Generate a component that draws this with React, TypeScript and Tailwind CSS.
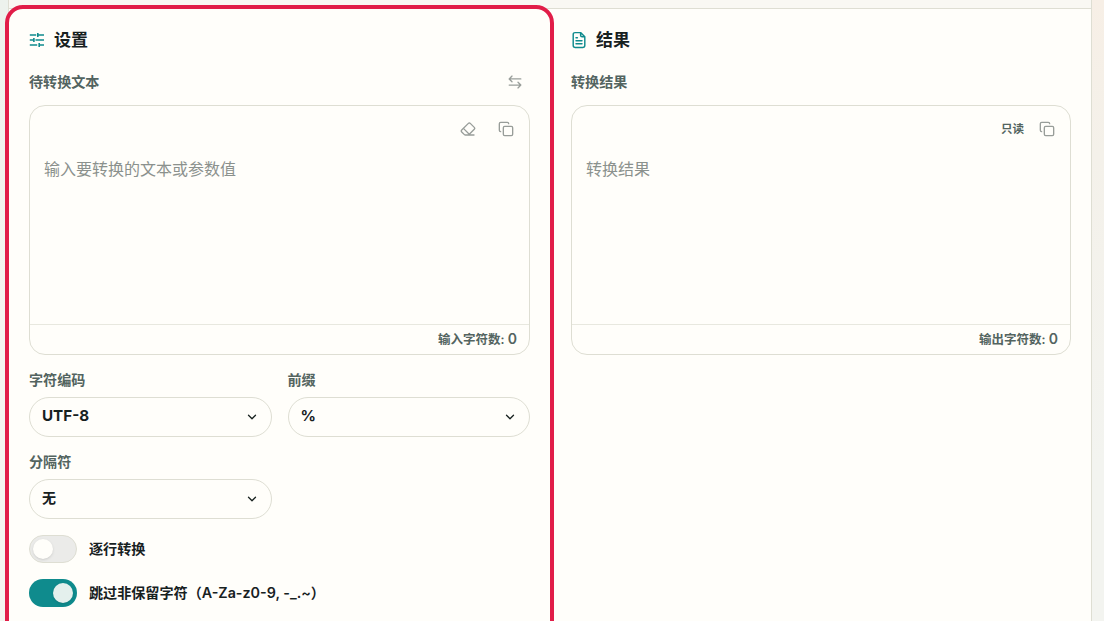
import React from "react";
import { ChevronDown, Copy, Eraser } from "lucide-react";

function SlidersIcon() {
  return (
    <svg width="16" height="16" viewBox="0 0 16 16" fill="none" stroke="#0f8b8d" strokeWidth="1.6" className="mr-px shrink-0">
      <path d="M.8 3h6.4M9.2 3H15M.8 8h3.4M6.5 8H15M.8 13h7.4M10.8 13H15M8.8 1v4M4.9 6v4M10.2 11v4" />
    </svg>
  );
}

function DocumentIcon() {
  return (
    <svg width="16" height="18" viewBox="0 0 16 18" fill="none" stroke="#0f8b8d" strokeWidth="1.45" strokeLinecap="round" strokeLinejoin="round" className="mr-px shrink-0">
      <path d="M9.6 1.6H4A1.8 1.8 0 0 0 2.2 3.4v11.2A1.8 1.8 0 0 0 4 16.4h8a1.8 1.8 0 0 0 1.8-1.8V5.8zM9.6 1.6V4.3a1.5 1.5 0 0 0 1.5 1.5h2.7M5 6.7h1.4M5 9.8h6M5 12.7h6" />
    </svg>
  );
}

function SwapIcon() {
  return (
    <svg width="14" height="14" viewBox="0 0 14 14" fill="none" stroke="#9a9f9b" strokeWidth="1.35" strokeLinecap="round" strokeLinejoin="round">
      <path d="M12.8 3.9H1.3M4 1.1 1.2 3.9 4 6.7M1.2 10.1h11.5M10 7.3l2.8 2.8-2.8 2.8" />
    </svg>
  );
}

function Title({ icon, children }: { icon: React.ReactNode; children: string }) {
  return (
    <h2 className="flex h-6 items-center gap-2 text-[17px] font-bold">
      <span className="flex w-[17px] justify-center">{icon}</span>
      <span className="pt-0.5">{children}</span>
    </h2>
  );
}

function Editor({ placeholder, count, actions }: { placeholder: string; count: string; actions: React.ReactNode }) {
  return (
    <div className="mt-3 flex h-[250px] flex-col rounded-[16px] border border-[#deded3]">
      <div className="flex h-[46px] items-center justify-end pr-[15px]">{actions}</div>
      <div className="flex-1 px-[14px] pt-[5px] text-[16px] leading-6 text-[#8b918d]">{placeholder}</div>
      <div className="flex h-[30px] items-center justify-end border-t border-[#e8e8df] pt-0.5 pr-3 text-[12.5px] font-semibold text-[#536460]">
        <span>{count}: <span className="text-[14px] leading-none">0</span></span>
      </div>
    </div>
  );
}

function Select({ label, value }: { label: string; value: string }) {
  return (
    <div>
      <div className="h-[17px] text-[14.1px] leading-[17px] font-semibold text-[#536460]">{label}</div>
      <div className="mt-[9px] flex h-10 items-center justify-between rounded-full border border-[#deded3] pr-3 pl-3">
        <span className={value === "无" ? "-mt-1 text-[14px] font-bold" : "-mt-px text-[15.2px] font-bold"}>{value}</span>
        <ChevronDown size={14} strokeWidth={2.2} />
      </div>
    </div>
  );
}

function Toggle({ on, label, latin, end }: { on?: boolean; label: string; latin?: string; end?: string }) {
  return (
    <div className="flex h-7 items-center gap-3 text-[14.1px] font-semibold whitespace-nowrap">
      <span className={on ? "flex h-7 w-12 items-center justify-end rounded-full bg-[#0f8b8d] px-1" : "flex h-7 w-12 items-center rounded-full border border-[#deded3] bg-[#ebebe9] px-[3px]"}>
        <span className={on ? "size-5 rounded-full bg-[#e4f0ed] shadow-sm" : "size-5 rounded-full bg-[#fffefa] shadow-sm"} />
      </span>
      <span>{label}<span className="text-[14.3px]">{latin}</span>{end}</span>
    </div>
  );
}

export default function App() {
  return (
    <div className="flex h-[621px] w-[1104px] overflow-hidden bg-linear-to-b from-[#edf2ed] to-[#f5f4ef] to-50% font-[Inter,'Noto_Sans_CJK_SC',sans-serif] text-[#17211f]">
      <main className="relative ml-2 flex w-[1084px] shrink-0 flex-col border-x border-[#deded3] bg-[#fffefa]">
        <div className="h-[9px] shrink-0 border-b border-[#deded3] bg-[#f9f8f3]" />
        <div className="flex flex-1">
          <section className="w-[541px] pt-[19px] pr-5 pl-5">
            <Title icon={<SlidersIcon />}>设置</Title>
            <div className="mt-[18px] flex h-[23px] items-center justify-between pr-2 text-[14.1px] font-semibold text-[#536460]">
              待转换文本<SwapIcon />
            </div>
            <Editor placeholder="输入要转换的文本或参数值" count="输入字符数" actions={<div className="flex gap-[22px] text-[#989d99]"><Eraser size={16} strokeWidth={2} /><Copy size={16} strokeWidth={2} /></div>} />
            <div className="mt-4 grid grid-cols-2 gap-4">
              <Select label="字符编码" value="UTF-8" />
              <Select label="前缀" value="%" />
              <Select label="分隔符" value="无" />
            </div>
            <div className="mt-4 flex flex-col gap-4">
              <Toggle label="逐行转换" />
              <Toggle on label="跳过非保留字符（" latin="A-Za-z0-9, -_.~" end="）" />
            </div>
          </section>
          <section className="w-[541px] pt-[19px] pr-5 pl-[21px]">
            <Title icon={<DocumentIcon />}>结果</Title>
            <div className="mt-[18px] flex h-[23px] items-center text-[14.1px] font-semibold text-[#536460]">转换结果</div>
            <Editor placeholder="转换结果" count="输出字符数" actions={<div className="flex items-center gap-[15px] text-[#989d99]"><span className="pt-0.5 text-[11.5px] font-semibold text-[#536460]">只读</span><Copy size={16} strokeWidth={2} /></div>} />
          </section>
        </div>
        <div className="absolute top-[5px] -left-1 h-[640px] w-[549px] rounded-[18px] border-4 border-[#e11d48]" />
      </main>
      <div className="w-3 bg-linear-to-b from-[#f7efe6] via-[#f4f1ea] via-25% to-[#f3f4f0] to-75%" />
    </div>
  );
}
